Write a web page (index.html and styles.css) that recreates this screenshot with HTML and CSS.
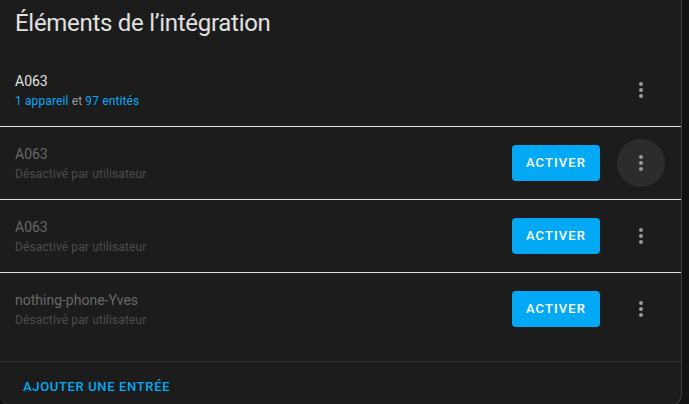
FILE: index.html
```html
<!DOCTYPE html>
<html lang="fr">
<head>
<meta charset="utf-8">
<link rel="stylesheet" href="styles.css">
</head>
<body>
<div class="card">
  <h1 class="card-header">Éléments de l’intégration</h1>
  <div class="list">
    <div class="row">
      <div class="text">
        <div class="primary">A063</div>
        <div class="secondary"><a class="link">1 appareil</a> et <a class="link">97 entités</a></div>
      </div>
      <div class="menu"><svg viewBox="0 0 24 24" width="24" height="24"><path d="M12,16A2,2 0 0,1 14,18A2,2 0 0,1 12,20A2,2 0 0,1 10,18A2,2 0 0,1 12,16M12,10A2,2 0 0,1 14,12A2,2 0 0,1 12,14A2,2 0 0,1 10,12A2,2 0 0,1 12,10M12,4A2,2 0 0,1 14,6A2,2 0 0,1 12,8A2,2 0 0,1 10,6A2,2 0 0,1 12,4Z"/></svg></div>
    </div>
    <div class="row disabled">
      <div class="text">
        <div class="primary">A063</div>
        <div class="secondary">Désactivé par utilisateur</div>
      </div>
      <button class="btn">Activer</button>
      <div class="menu hover"><svg viewBox="0 0 24 24" width="24" height="24"><path d="M12,16A2,2 0 0,1 14,18A2,2 0 0,1 12,20A2,2 0 0,1 10,18A2,2 0 0,1 12,16M12,10A2,2 0 0,1 14,12A2,2 0 0,1 12,14A2,2 0 0,1 10,12A2,2 0 0,1 12,10M12,4A2,2 0 0,1 14,6A2,2 0 0,1 12,8A2,2 0 0,1 10,6A2,2 0 0,1 12,4Z"/></svg></div>
    </div>
    <div class="row disabled">
      <div class="text">
        <div class="primary">A063</div>
        <div class="secondary">Désactivé par utilisateur</div>
      </div>
      <button class="btn">Activer</button>
      <div class="menu"><svg viewBox="0 0 24 24" width="24" height="24"><path d="M12,16A2,2 0 0,1 14,18A2,2 0 0,1 12,20A2,2 0 0,1 10,18A2,2 0 0,1 12,16M12,10A2,2 0 0,1 14,12A2,2 0 0,1 12,14A2,2 0 0,1 10,12A2,2 0 0,1 12,10M12,4A2,2 0 0,1 14,6A2,2 0 0,1 12,8A2,2 0 0,1 10,6A2,2 0 0,1 12,4Z"/></svg></div>
    </div>
    <div class="row disabled last">
      <div class="text">
        <div class="primary">nothing-phone-Yves</div>
        <div class="secondary">Désactivé par utilisateur</div>
      </div>
      <button class="btn">Activer</button>
      <div class="menu"><svg viewBox="0 0 24 24" width="24" height="24"><path d="M12,16A2,2 0 0,1 14,18A2,2 0 0,1 12,20A2,2 0 0,1 10,18A2,2 0 0,1 12,16M12,10A2,2 0 0,1 14,12A2,2 0 0,1 12,14A2,2 0 0,1 10,12A2,2 0 0,1 12,10M12,4A2,2 0 0,1 14,6A2,2 0 0,1 12,8A2,2 0 0,1 10,6A2,2 0 0,1 12,4Z"/></svg></div>
    </div>
  </div>
  <div class="actions">
    <button class="text-btn">Ajouter une entrée</button>
  </div>
</div>
</body>
</html>
```
FILE: styles.css
```css
* { box-sizing: border-box; }
html, body { margin: 0; padding: 0; }
body {
  background: #111111;
  font-family: Roboto, "Noto Sans", sans-serif;
  color: #e1e1e1;
  width: 689px;
  height: 404px;
  overflow: hidden;
}
.card {
  width: 682px;
  height: 406px;
  background: #1c1c1c;
  border-right: 1px solid #3c3c3c;
  border-bottom: 1px solid #3c3c3c;
  border-radius: 0 0 12px 12px;
  display: flex;
  flex-direction: column;
}
.card-header {
  margin: 0;
  font-size: 24px;
  font-weight: 400;
  line-height: 32px;
  letter-spacing: -0.012em;
  padding: 7px 15px 15px;
  color: #e1e1e1;
}
.list {
  padding-bottom: 16px;
  border-bottom: 1px solid #2f2f2f;
}
.row {
  height: 73px;
  display: flex;
  align-items: center;
  padding: 0 16px 0 15px;
  border-bottom: 1px solid #e1e1e1;
}
.row.last { border-bottom: none; height: 72px; }
.text { flex: 1; display: flex; flex-direction: column; padding-top: 1px; }
.primary { font-size: 14px; line-height: 20px; color: #e1e1e1; }
.secondary { font-size: 12px; line-height: 20px; color: #9b9b9b; letter-spacing: 0.12px; }
.link { color: #03a9f4; text-decoration: none; }
.disabled .primary { color: #686868; }
.disabled .secondary { color: #4c4c4c; }
.btn {
  height: 36px;
  width: 88px;
  border: none;
  border-radius: 4px;
  background: #03a9f4;
  color: #ffffff;
  font-family: Roboto, sans-serif;
  font-size: 13px;
  font-weight: 500;
  letter-spacing: 1.1px;
  text-transform: uppercase;
  padding: 0;
  margin-right: 17px;
  margin-bottom: 1px;
}
.menu {
  width: 48px;
  height: 48px;
  border-radius: 50%;
  display: flex;
  align-items: center;
  justify-content: center;
  fill: #9b9b9b;
  margin-bottom: 1px;
}
.menu.hover { background: #2c2c2c; }
.actions {
  padding: 6px 8px;
}
.text-btn {
  height: 36px;
  border: none;
  background: transparent;
  color: #03a9f4;
  font-family: Roboto, sans-serif;
  font-size: 13px;
  font-weight: 500;
  letter-spacing: 0.65px;
  text-transform: uppercase;
  padding: 0 15px;
}
```
